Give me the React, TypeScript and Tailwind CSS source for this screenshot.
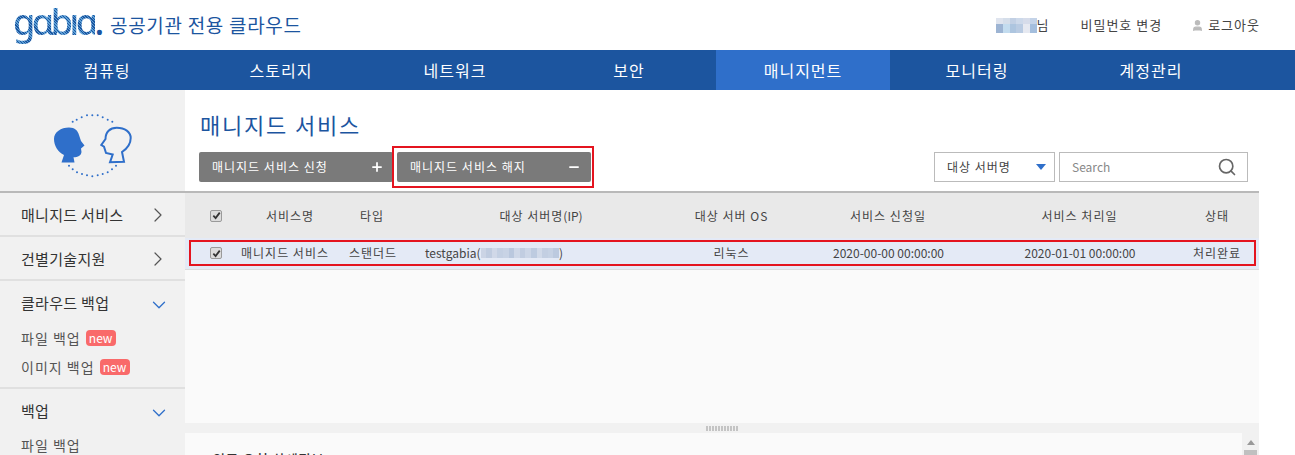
import React from "react";
import { ChevronRight, ChevronDown, Search, Plus, Minus, User } from "lucide-react";

const NAV = ["컴퓨팅", "스토리지", "네트워크", "보안", "매니지먼트", "모니터링", "계정관리"];

const HEAD_TOP = ["#dfe4ee", "#d5deea", "#c2d0e4", "#cdd9ea", "#d6dcea", "#c4d3e8"];
const HEAD_BOTTOM = ["#9db4d3", "#c3dcef", "#adc5df", "#b9cbe2", "#e6e9f1", "#a4bedd"];
const IP_CELLS = ["#cbd4e5", "#c0cce0", "#d0d8e8", "#c4d0e3", "#c8d3e5", "#bac8de", "#cfd8e8", "#c1cde1", "#ccd6e7", "#bdcbe0", "#d1dae9", "#c3cfe2", "#c6d2e4", "#bccadf"];

const DOTS = [
  [32.7, 16.7], [36.7, 14.7], [41.7, 12.3], [47, 10.3], [52.3, 10.3], [57.7, 10.3], [62.7, 12.3], [67.7, 14.7], [72.3, 16.7],
  [29, 60.7], [32.7, 64.3], [37, 67.3], [42, 69], [47, 70.3], [52.3, 71.3], [57.7, 70.3], [62.7, 69], [67.7, 67.3], [72, 64.3], [76, 60.7],
];

function Check() {
  return (
    <span className="flex h-3 w-3 items-center justify-center rounded-[2px] border border-[#9a9a9a] bg-[#dcdcdc]">
      <svg viewBox="0 0 10 10" className="h-[9px] w-[9px]">
        <path d="M1.5 5.2 L4 7.8 L8.6 1.8" fill="none" stroke="#333" strokeWidth="2" />
      </svg>
    </span>
  );
}

function Cells({ colors, cell, height }: { colors: string[]; cell: number; height: number }) {
  return (
    <span className="flex">
      {colors.map((c, i) => (
        <span key={i} style={{ background: c, width: cell, height }} />
      ))}
    </span>
  );
}

function NewBadge() {
  return (
    <span className="ml-[5px] w-[30px] rounded-[4px] bg-[#f96a6a] text-center text-[12px] leading-[16px] tracking-normal text-white">
      new
    </span>
  );
}

function Heads() {
  return (
    <svg viewBox="0 0 105 80" className="h-[80px] w-[105px]">
      <g fill="#2f6fca">
        {DOTS.map(([x, y], i) => (
          <circle key={i} cx={x} cy={y} r="1" />
        ))}
        <path d="M29 22.5 C35 22.5 38 26 39 30 L41 36 L44.5 40.5 L41 43.5 L41.5 47 C41 51 38 52 33.5 52.3 L34.5 57.5 L21.5 57.5 L24 50 C18 47 14 41 14 34 C14 27 21 22.5 29 22.5 Z" />
      </g>
      <path
        d="M76.7 22.7 C85 22.7 90.7 27 90.7 33 C90.7 38 88 43 82 47 L84 56.7 L70 57.3 L72.7 49.5 L66 48 L64 41.7 L61.3 40 L65.5 34 C65.5 27 70 22.7 76.7 22.7 Z"
        fill="none"
        stroke="#2f6fca"
        strokeWidth="2"
      />
    </svg>
  );
}

function Side({ label, open }: { label: string; open?: boolean }) {
  return (
    <div className="flex items-center justify-between pr-[15px] text-[15px] leading-[20px] tracking-[0.3px] text-[#333]">
      <span>{label}</span>
      {open ? (
        <ChevronDown size={22} strokeWidth={1.4} className="-my-1 translate-y-[2px] text-[#2f6fca]" />
      ) : (
        <ChevronRight size={24} strokeWidth={1.2} className="-my-1 text-[#555]" />
      )}
    </div>
  );
}

export default function App() {
  return (
    <div className="h-[455px] w-[1295px] overflow-hidden bg-white font-['Noto_Sans_CJK_KR','Noto_Sans',sans-serif] text-[#444]">
      {/* top bar */}
      <header className="flex h-[50px] items-center justify-between pl-[13px] pr-[35px]">
        <div className="flex items-center">
          <span className="w-[97px] whitespace-nowrap pb-[6px] font-['Noto_Sans',sans-serif] text-[36px] font-medium leading-none tracking-[-3.5px]">
            <span className="bg-[repeating-linear-gradient(45deg,#1c559f_0_1px,#5b9fd6_1px_2px)] bg-clip-text text-transparent">
              gɑbıɑ
            </span>
            <span className="text-[#1c559f]">.</span>
          </span>
          <span className="text-[19px] tracking-[0.7px] text-[#1c559f]">공공기관 전용 클라우드</span>
        </div>
        <div className="flex items-center text-[13px] tracking-[1px] text-[#444]">
          <span className="flex flex-col">
            <Cells colors={HEAD_TOP} cell={6.7} height={6} />
            <Cells colors={HEAD_BOTTOM} cell={6.7} height={9} />
          </span>
          <span>님</span>
          <span className="ml-[31px]">비밀번호 변경</span>
          <User size={13} fill="#bbb" className="ml-[29px] mr-[4px] text-[#bbb]" />
          <span>로그아웃</span>
        </div>
      </header>

      {/* main nav */}
      <nav className="flex h-[40px] bg-[#1c559f] pl-[20px]">
        {NAV.map((n) => (
          <div
            key={n}
            className={`flex w-[174px] items-center justify-center text-[16px] tracking-[1px] text-white ${n === "매니지먼트" ? "bg-[#2f6fca]" : ""}`}
          >
            {n}
          </div>
        ))}
      </nav>

      <div className="flex h-[365px]">
        {/* sidebar */}
        <aside className="w-[185px] shrink-0 bg-[#f1f1f1]">
          <div className="flex h-[103px] items-start justify-center border-b-2 border-[#b9b9b9] pt-[15px]">
            <Heads />
          </div>
          <div className="flex h-[44px] items-center border-b-2 border-[#e0e0e0] pl-[21px] pt-[2px]">
            <div className="w-full"><Side label="매니지드 서비스" /></div>
          </div>
          <div className="flex h-[44px] items-center border-b-2 border-[#e0e0e0] pl-[21px] pt-[2px]">
            <div className="w-full"><Side label="건별기술지원" /></div>
          </div>
          <div className="h-[108px] border-b-2 border-[#e0e0e0] pl-[21px] pt-[12px]">
            <Side label="클라우드 백업" open />
            <div className="mt-[15px] flex items-center text-[14px] leading-[20px] tracking-[1px] text-[#555]">
              파일 백업
              <NewBadge />
            </div>
            <div className="mt-[9px] flex items-center text-[14px] leading-[20px] tracking-[1px] text-[#555]">
              이미지 백업
              <NewBadge />
            </div>
          </div>
          <div className="pl-[21px] pt-[12px]">
            <Side label="백업" open />
            <div className="mt-[14px] text-[14px] leading-[20px] tracking-[1px] text-[#555]">파일 백업</div>
          </div>
        </aside>

        {/* content */}
        <main className="w-[1074px] shrink-0">
          <div className="h-[101px]">
            <h1 className="pl-[15px] pt-[16px] text-[22px] leading-[36px] tracking-[1.8px] text-[#1c559f]">매니지드 서비스</h1>
            <div className="mt-[4px] flex items-center pl-[14px] pr-[11px] text-[12px]">
              <button className="flex h-[30px] w-[194px] items-center justify-between rounded-[2px] bg-[#7a7a7a] pl-[13px] pr-[9px] tracking-[1px] text-white">
                매니지드 서비스 신청
                <Plus size={14} strokeWidth={3} />
              </button>
              <div className="-ml-[1px] border-2 border-[#e4141f] py-[4px] pl-[3px] pr-[1px]">
                <button className="flex h-[30px] w-[194px] items-center justify-between rounded-[2px] bg-[#7a7a7a] pl-[13px] pr-[10px] tracking-[1px] text-white">
                  매니지드 서비스 해지
                  <Minus size={14} strokeWidth={3} />
                </button>
              </div>
              <div className="ml-auto flex h-[30px] w-[121px] items-center justify-between border border-[#bbb] pl-[12px] pr-[8px] tracking-[1px] text-[#444]">
                대상 서버명
                <span className="h-0 w-0 border-x-[5px] border-t-[6px] border-x-transparent border-t-[#2f6fca]" />
              </div>
              <div className="ml-[4px] flex h-[30px] w-[189px] items-center justify-between border border-[#bbb] pl-[12px] pr-[10px] text-[#888]">
                Search
                <Search size={20} strokeWidth={2} className="text-[#666]" />
              </div>
            </div>
          </div>

          {/* grid */}
          <div className="h-[232px] bg-[#fafafa]">
            <div className="flex h-[47px] items-center border-t-2 border-[#b9b9b9] bg-[#e9e9e9] text-center text-[12px] tracking-[1px] text-[#444]">
              <div className="flex w-[62px] justify-center"><Check /></div>
              <div className="w-[86px]">서비스명</div>
              <div className="w-[78px]">타입</div>
              <div className="w-[260px]">대상 서버명<span className="tracking-normal">(IP)</span></div>
              <div className="w-[121px]">대상 서버 OS</div>
              <div className="w-[192px]">서비스 신청일</div>
              <div className="w-[191px]">서비스 처리일</div>
              <div className="w-[84px]">상태</div>
            </div>
            <div className="h-[32px] border-b border-[#dcdcdc] bg-[#e4eaf6] pl-[4px] pr-[3px] pt-[2px]">
              <div className="flex h-[26px] items-center whitespace-nowrap border-2 border-[#e4141f] text-center text-[12px] text-[#444]">
                <div className="flex w-[49px] justify-center pl-[1px]"><Check /></div>
                <div className="w-[90px] tracking-[1px]">매니지드 서비스</div>
                <div className="w-[86px] tracking-[1px]">스탠더드</div>
                <div className="flex w-[255px] items-center pl-[9px]">
                  testgabia(
                  <Cells colors={IP_CELLS} cell={5.6} height={10} />)
                </div>
                <div className="w-[121px] tracking-[1px]">리눅스</div>
                <div className="w-[193px]">2020-00-00 00:00:00</div>
                <div className="w-[190px]">2020-01-01 00:00:00</div>
                <div className="w-[79px] pl-[5px] tracking-[1px]">처리완료</div>
              </div>
            </div>
          </div>

          {/* splitter */}
          <div className="flex h-[10px] items-center justify-center bg-[#f1f1f1]">
            <div className="h-[5px] w-[32px] bg-[repeating-linear-gradient(90deg,#c4c4c4_0_2px,transparent_2px_3px)]" />
          </div>

          {/* detail panel */}
          <div className="flex h-[22px]">
            <div className="flex-1 bg-[#fafafa] pl-[28px] pt-[16px] text-[13px] font-medium leading-[20px] tracking-[1px] text-[#333]">
              인증 요청 상세정보
            </div>
            <div className="flex w-[17px] flex-col items-center bg-[#f1f1f1] pt-[7px]">
              <span className="h-0 w-0 border-x-[4px] border-b-[5px] border-x-transparent border-b-[#999]" />
              <span className="mt-[5px] h-[6px] w-[13px] bg-[#c0c0c0]" />
            </div>
          </div>
        </main>
      </div>
    </div>
  );
}
